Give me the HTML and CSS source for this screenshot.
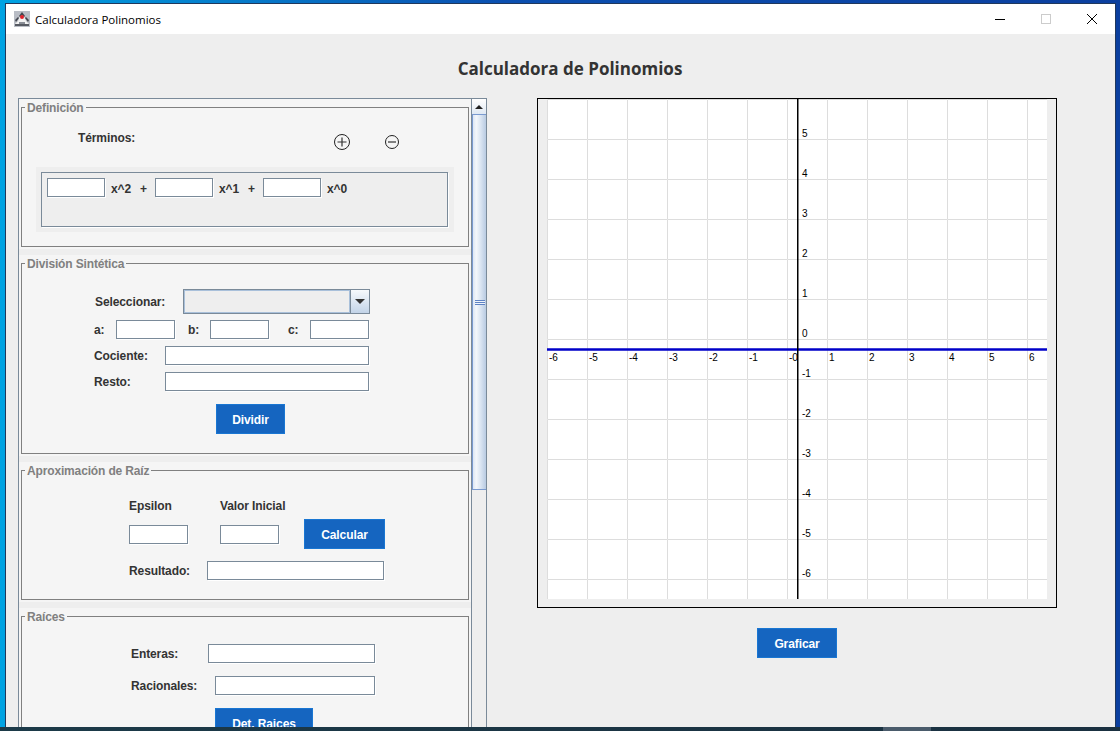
FILE: index.html
```html
<!DOCTYPE html>
<html lang="es">
<head>
    <meta charset="UTF-8">
    <meta name="viewport" content="width=device-width, initial-scale=1.0">
    <title>Calculadora Polinomios</title>
    <link rel="stylesheet" href="styles.css">
</head>
<body>
    <div class="desktop">
        <div class="window">
            <div class="titlebar">
                <svg class="app-icon" width="16" height="16" viewBox="0 0 16 16">
                    <rect x="0" y="0" width="16" height="16" fill="#b9bdc5"/>
                    <path d="M1 13l3-3 2-5 2-3 2 3 2 5 3 3z" fill="#f2f2f2"/>
                    <path d="M8 1l3 4-1 1-2-2-2 2-1-1zM1 9l3-3 1 1-3 4zM15 9l-3-3-1 1 3 4z" fill="#43474f"/>
                    <path d="M1 13h14v2H1z" fill="#565a62"/>
                    <path d="M5 11h6v2H5z" fill="#8a8e96"/>
                    <circle cx="8" cy="6" r="2" fill="#e0202a"/>
                </svg>
                <span class="app-name">Calculadora Polinomios</span>
                <div class="win-controls">
                    <div class="win-btn">
                        <svg width="10" height="10" viewBox="0 0 10 10"><path d="M0 5.5h10" stroke="#000"/></svg>
                    </div>
                    <div class="win-btn">
                        <svg width="10" height="10" viewBox="0 0 10 10"><rect x=".5" y=".5" width="9" height="9" fill="none" stroke="#ccc"/></svg>
                    </div>
                    <div class="win-btn">
                        <svg width="10" height="10" viewBox="0 0 10 10"><path d="M0 0l10 10M10 0L0 10" stroke="#000"/></svg>
                    </div>
                </div>
            </div>

            <h1 class="page-title">Calculadora de Polinomios</h1>

            <div class="main">
                <div class="scroll-pane">
                    <div class="panels">
                        <div class="panel">
                            <fieldset class="group group-def">
                                <legend>Definición</legend>
                                <div class="terms-head">
                                    <span class="terms-label">Términos:</span>
                                    <svg class="icon-plus" width="18" height="18" viewBox="0 0 18 18">
                                        <circle cx="9" cy="9" r="7.5" fill="none" stroke="#222"/>
                                        <path d="M4.5 9h9M9 4.5v9" stroke="#333" stroke-width="1.2"/>
                                    </svg>
                                    <svg class="icon-minus" width="16" height="16" viewBox="0 0 16 16">
                                        <circle cx="8" cy="8" r="6.5" fill="none" stroke="#222"/>
                                        <path d="M4 8h8" stroke="#333" stroke-width="1.2"/>
                                    </svg>
                                </div>
                                <div class="terms-outer">
                                    <div class="terms-inner">
                                        <input class="field field-sm" type="text">
                                        <span class="term">x^2</span>
                                        <span class="plus">+</span>
                                        <input class="field field-sm" type="text">
                                        <span class="term">x^1</span>
                                        <span class="plus">+</span>
                                        <input class="field field-sm" type="text">
                                        <span class="term">x^0</span>
                                    </div>
                                </div>
                            </fieldset>
                        </div>

                        <div class="panel">
                            <fieldset class="group group-div">
                                <legend>División Sintética</legend>
                                <div class="row row-select">
                                    <label class="lbl-select">Seleccionar:</label>
                                    <div class="combo">
                                        <div class="combo-value"></div>
                                        <div class="combo-btn"><span class="arrow-down"></span></div>
                                    </div>
                                </div>
                                <div class="row row-abc">
                                    <label class="lbl-coef">a:</label>
                                    <input class="field field-sm" type="text">
                                    <label class="lbl-coef lbl-b">b:</label>
                                    <input class="field field-sm" type="text">
                                    <label class="lbl-coef lbl-c">c:</label>
                                    <input class="field field-sm" type="text">
                                </div>
                                <div class="row row-out">
                                    <label class="lbl-out">Cociente:</label>
                                    <input class="field field-out" type="text">
                                </div>
                                <div class="row row-out">
                                    <label class="lbl-out">Resto:</label>
                                    <input class="field field-out" type="text">
                                </div>
                                <button class="btn btn-dividir">Dividir</button>
                            </fieldset>
                        </div>

                        <div class="panel">
                            <fieldset class="group group-aprox">
                                <legend>Aproximación de Raíz</legend>
                                <div class="row row-heads">
                                    <span class="lbl-eps">Epsilon</span>
                                    <span>Valor Inicial</span>
                                </div>
                                <div class="row row-calc">
                                    <input class="field field-sm" type="text">
                                    <input class="field field-sm field-start" type="text">
                                    <button class="btn btn-calcular">Calcular</button>
                                </div>
                                <div class="row row-result">
                                    <label class="lbl-result">Resultado:</label>
                                    <input class="field field-result" type="text">
                                </div>
                            </fieldset>
                        </div>

                        <div class="panel">
                            <fieldset class="group group-raices">
                                <legend>Raíces</legend>
                                <div class="row row-enteras">
                                    <label class="lbl-enteras">Enteras:</label>
                                    <input class="field field-enteras" type="text">
                                </div>
                                <div class="row row-racionales">
                                    <label class="lbl-racionales">Racionales:</label>
                                    <input class="field field-racionales" type="text">
                                </div>
                                <button class="btn btn-raices">Det. Raices</button>
                            </fieldset>
                        </div>
                    </div>

                    <div class="scrollbar">
                        <div class="scroll-up"><span class="arrow-up"></span></div>
                        <div class="scroll-thumb">
                            <div class="grip"></div>
                        </div>
                    </div>
                </div>

                <div class="graph-col">
                    <div class="graph-box">
                        <svg class="graph" width="500" height="500" viewBox="0 0 500 500">
                            <defs>
                                <pattern id="grid" width="40" height="40" patternUnits="userSpaceOnUse">
                                    <path d="M.5 40V.5H40" fill="none" stroke="#ddd"/>
                                </pattern>
                            </defs>
                            <rect width="500" height="500" fill="#fff"/>
                            <rect width="500" height="500" fill="url(#grid)"/>
                            <path d="M0 250.5H500" stroke="#0000c8" stroke-width="2.4"/>
                            <path d="M250.75 0V500" stroke="#000" stroke-width="1.5"/>
                            <g class="ticks">
                                <text x="2" y="262">-6</text>
                                <text x="42" y="262">-5</text>
                                <text x="82" y="262">-4</text>
                                <text x="122" y="262">-3</text>
                                <text x="162" y="262">-2</text>
                                <text x="202" y="262">-1</text>
                                <text x="242" y="262">-0</text>
                                <text x="282" y="262">1</text>
                                <text x="322" y="262">2</text>
                                <text x="362" y="262">3</text>
                                <text x="402" y="262">4</text>
                                <text x="442" y="262">5</text>
                                <text x="482" y="262">6</text>
                                <text x="255" y="38">5</text>
                                <text x="255" y="78">4</text>
                                <text x="255" y="118">3</text>
                                <text x="255" y="158">2</text>
                                <text x="255" y="198">1</text>
                                <text x="255" y="238">0</text>
                                <text x="255" y="278">-1</text>
                                <text x="255" y="318">-2</text>
                                <text x="255" y="358">-3</text>
                                <text x="255" y="398">-4</text>
                                <text x="255" y="438">-5</text>
                                <text x="255" y="478">-6</text>
                            </g>
                        </svg>
                    </div>
                    <button class="btn btn-graficar">Graficar</button>
                </div>
            </div>
        </div>
        <div class="taskbar">
            <div class="task-item"></div>
        </div>
    </div>
</body>
</html>
```

FILE: styles.css
```css
* {
    box-sizing: border-box;
}
html, body {
    margin: 0;
    padding: 0;
}
body {
    font-family: "Liberation Sans", Arial, sans-serif;
    font-size: 12px;
    font-weight: bold;
    letter-spacing: -0.1px;
    color: #333;
}
.desktop {
    width: 1120px;
    height: 731px;
    display: flex;
    flex-direction: column;
    overflow: hidden;
    padding-top: 3px;
    background: linear-gradient(90deg, #00a3e3 0, #0b4fb0 45%, #0b3f9f 100%);
}
.window {
    flex: 1;
    min-height: 0;
    margin: 0 4px 0 5px;
    border: 1px solid #20385c;
    border-bottom: 0;
    background: #eee;
    display: flex;
    flex-direction: column;
    overflow: hidden;
}
.titlebar {
    height: 30px;
    flex: none;
    background: #fff;
    display: flex;
    align-items: center;
    padding-left: 8px;
}
.app-icon {
    margin-right: 5px;
}
.app-name {
    font-family: "Open Sans", "Noto Sans", sans-serif;
    font-size: 11.5px;
    font-weight: normal;
    letter-spacing: 0;
    color: #000;
}
.win-controls {
    margin-left: auto;
    display: flex;
}
.win-btn {
    width: 46px;
    height: 30px;
    display: flex;
    align-items: center;
    justify-content: center;
}
.page-title {
    flex: none;
    height: 64px;
    margin: 0;
    padding: 23px 0 0 19px;
    font-family: "Open Sans", "Noto Sans", sans-serif;
    font-size: 17px;
    line-height: 24px;
    font-weight: bold;
    letter-spacing: 0;
    text-align: center;
    color: #333;
}
.main {
    flex: 1;
    min-height: 0;
    display: flex;
    align-items: flex-start;
    padding-left: 12px;
}

/* left side */
.scroll-pane {
    width: 469px;
    height: 640px;
    flex: none;
    display: flex;
    border: 1px solid #7a8a99;
}
.panels {
    width: 452px;
    flex: none;
    display: flex;
    flex-direction: column;
    gap: 6px;
}
.panel {
    background: #f5f5f5;
    padding: 2px;
}
.group {
    width: 448px;
    margin: 0;
    padding: 0 0 19px;
    border: 1px solid #808080;
    min-width: 0;
}
.group legend {
    margin-left: 3px;
    padding: 1px 2px 0;
    color: #808080;
    line-height: 12px;
    letter-spacing: -0.15px;
}
.row {
    display: flex;
    align-items: center;
}
.field {
    height: 19px;
    padding: 0 3px;
    border: 1px solid #7a8a99;
    border-radius: 0;
    background: #fff;
    box-shadow: 1px 1px 0 #fff;
    outline: none;
    flex: none;
}
.field-sm {
    width: 59px;
}
.btn {
    display: block;
    height: 30px;
    padding: 2px 0 0;
    border: 1px solid #1976d2;
    background: #1565c0;
    color: #fff;
    font-family: "Liberation Sans", Arial, sans-serif;
    font-size: 12px;
    font-weight: bold;
    letter-spacing: -0.1px;
}

/* definicion */
.group-def {
    padding-bottom: 14px;
}
.terms-head {
    display: flex;
    align-items: flex-start;
    margin-top: 17px;
    padding-left: 56px;
}
.terms-label {
    width: 255px;
    line-height: 14px;
}
.icon-plus {
    margin-top: 2px;
}
.icon-minus {
    margin: 3px 0 0 33px;
}
.terms-outer {
    width: 418px;
    height: 65px;
    margin: 16px 0 0 14px;
    padding: 5px 6px 6px 5px;
    background: #eee;
}
.terms-inner {
    height: 55px;
    display: flex;
    align-items: flex-start;
    padding: 5px;
    border: 1px solid #7a8a99;
    box-shadow: 1px 1px 0 #fff;
}
.terms-inner .field-sm {
    width: 58px;
    margin-right: 1px;
}
.term {
    width: 29px;
    margin-left: 5px;
    line-height: 23px;
}
.plus {
    width: 15px;
    line-height: 23px;
}

/* division sintetica */
.row-select {
    margin-top: 19px;
    padding-left: 73px;
}
.lbl-select {
    width: 88px;
}
.combo {
    width: 187px;
    height: 25px;
    display: flex;
    border: 1px solid #7a8a99;
}
.combo-value {
    flex: 1;
    background: #eee;
    border: 1px solid #a9c0da;
}
.combo-btn {
    width: 19px;
    display: flex;
    align-items: center;
    justify-content: center;
    border-left: 1px solid #7a8a99;
    background: linear-gradient(180deg, #f6f9fc 0, #c3d4e8 100%);
}
.arrow-down {
    width: 0;
    height: 0;
    border-left: 5px solid transparent;
    border-right: 5px solid transparent;
    border-top: 5px solid #333;
}
.row-abc {
    margin-top: 6px;
    padding-left: 72px;
}
.lbl-coef {
    width: 22px;
}
.lbl-b {
    margin-left: 13px;
}
.lbl-c {
    margin-left: 19px;
}
.row-out {
    margin-top: 7px;
    padding-left: 72px;
}
.lbl-out {
    width: 71px;
}
.field-out {
    width: 204px;
}
.btn-dividir {
    width: 69px;
    margin: 13px 0 0 194px;
}

/* aproximacion */
.row-heads {
    margin-top: 22px;
    padding-left: 107px;
    line-height: 14px;
}
.lbl-eps {
    width: 91px;
}
.row-calc {
    margin-top: 6px;
    padding-left: 107px;
}
.field-start {
    margin-left: 32px;
}
.btn-calcular {
    width: 81px;
    margin-left: 25px;
}
.row-result {
    margin-top: 12px;
    padding-left: 107px;
}
.lbl-result {
    width: 78px;
}
.field-result {
    width: 177px;
}

/* raices */
.row-enteras {
    margin-top: 21px;
    padding-left: 109px;
}
.lbl-enteras {
    width: 77px;
}
.field-enteras {
    width: 167px;
}
.row-racionales {
    margin-top: 13px;
    padding-left: 109px;
}
.lbl-racionales {
    width: 84px;
}
.field-racionales {
    width: 160px;
}
.btn-raices {
    width: 98px;
    margin: 13px 0 0 193px;
}

/* scrollbar */
.scrollbar {
    width: 15px;
    flex: none;
    display: flex;
    flex-direction: column;
    border-left: 1px solid #7a8a99;
    background: #eee;
}
.scroll-up {
    height: 16px;
    display: flex;
    align-items: center;
    justify-content: center;
    background: linear-gradient(180deg, #fff 0, #dfe8f3 100%);
    border-bottom: 1px solid #7a9ad0;
}
.arrow-up {
    width: 0;
    height: 0;
    border-left: 4px solid transparent;
    border-right: 4px solid transparent;
    border-bottom: 4px solid #222;
}
.scroll-thumb {
    height: 375px;
    display: flex;
    align-items: center;
    justify-content: center;
    border-left: 1px solid #7a9ad0;
    border-bottom: 1px solid #7a9ad0;
    background: linear-gradient(90deg, #dbe6f4 0, #f4f7fb 25%, #dde7f3 55%, #b9cbe2 100%);
}
.grip {
    width: 10px;
    height: 5px;
    background: repeating-linear-gradient(180deg, #5f83c4 0, #5f83c4 1px, #eef3fa 1px, #eef3fa 2px);
}

/* right side */
.graph-col {
    margin-left: 50px;
    display: flex;
    flex-direction: column;
    align-items: center;
}
.graph-box {
    width: 520px;
    height: 510px;
    padding: 0 9px;
    border: 1px solid #000;
}
.graph {
    display: block;
}
.ticks text {
    font-family: "Liberation Sans", Arial, sans-serif;
    font-size: 10px;
    font-weight: normal;
    letter-spacing: 0;
    fill: #000;
}
.btn-graficar {
    width: 80px;
    margin-top: 20px;
}

.taskbar {
    height: 4px;
    flex: none;
    background: linear-gradient(90deg, #1c3a48 0, #1a3040 100%);
}
.task-item {
    width: 48px;
    height: 4px;
    margin-left: 883px;
    background: #4a5b6b;
}
```
